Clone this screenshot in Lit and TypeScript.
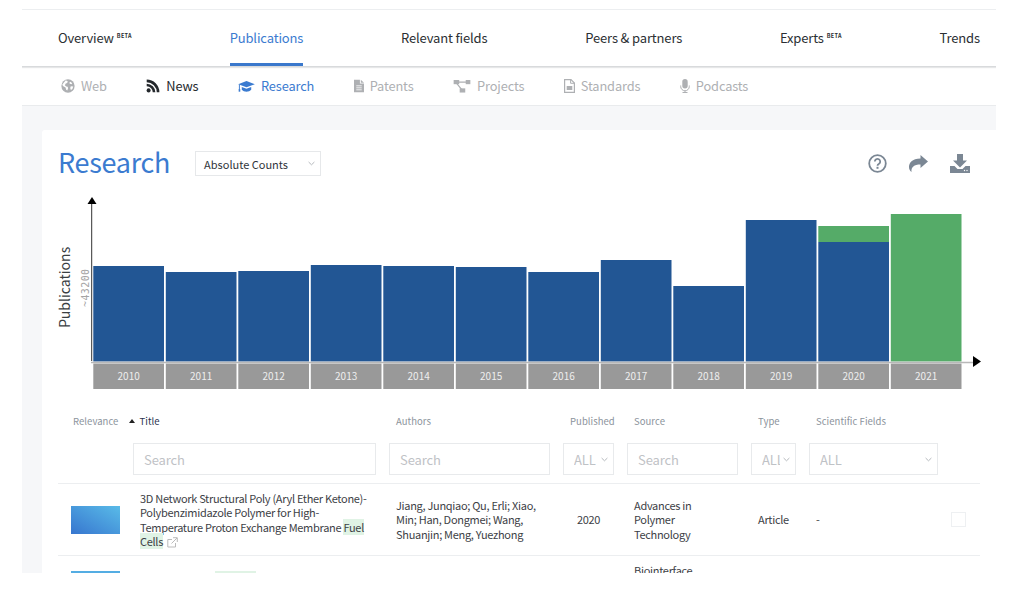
import { LitElement, html, css, svg, unsafeCSS } from "lit";
import { customElement } from "lit/decorators.js";

const FONT = `"Noto Sans CJK JP", "Noto Sans", sans-serif`;

const bars = [
  { y: 2010, top: 266 },
  { y: 2011, top: 272 },
  { y: 2012, top: 271 },
  { y: 2013, top: 265 },
  { y: 2014, top: 266 },
  { y: 2015, top: 267 },
  { y: 2016, top: 272 },
  { y: 2017, top: 260 },
  { y: 2018, top: 286 },
  { y: 2019, top: 220 },
  { y: 2020, top: 242, green: 226 },
  { y: 2021, top: 214, all: true },
];

const icons = {
  globe: html`<svg viewBox="0 0 16 16" width="14" height="14"><circle cx="8" cy="8" r="7.6" fill="currentColor"/><path d="M5.500 1.500 7.800 2.800 7 4.600 5.400 5.200 4.400 7 6 8.600l1.600.2.500 1.700-.9 2.600-1.300-.7-.7-2.800L2.200 8 1.500 6.200ZM10.800 3l2 1.800-.8 1.200-2-.5-.4-1.500ZM11.200 8.200l2.800.3-1 2.900-1.700 1.200-.8-2.400Z" fill="#fff"/></svg>`,
  rss: html`<svg viewBox="0 0 16 16" width="14" height="14"><circle cx="3" cy="13" r="2.300" fill="currentColor"/><path d="M.8 6.800a8.400 8.400 0 0 1 8.400 8.400M.8 2.200a13 13 0 0 1 13 13" fill="none" stroke="currentColor" stroke-width="3"/></svg>`,
  cap: html`<svg viewBox="0 0 18 13" width="17" height="13"><path d="M9 .8 17.800 4 9 7.300.2 4Z" fill="currentColor"/><path d="M4 7v3c1.200 1.400 3 2 5 2s3.800-.6 5-2V7L9 8.900Z" fill="currentColor"/><path d="M1.500 4.500V10" stroke="currentColor" stroke-width="1" fill="none"/><rect x=".7" y="9.300" width="1.700" height="2.700" fill="currentColor"/></svg>`,
  doc: html`<svg viewBox="0 0 11 14" width="10" height="14"><path d="M0 0h6.500v4.300H11V14H0Z" fill="currentColor"/><path d="M7.500 0 11 3.300H7.500Z" fill="currentColor"/><path d="M2.500 6.800h6M2.500 9h6M2.500 11.200h6" stroke="#fff" stroke-width=".9"/></svg>`,
  nodes: html`<svg viewBox="0 0 18 14" width="18" height="13"><rect x="0" y="0" width="6" height="4.500" fill="currentColor"/><rect x="13" y="0" width="5" height="4.500" fill="currentColor"/><rect x="6.500" y="9" width="6" height="4.500" fill="currentColor"/><path d="M5 2.200h8.500M3.500 4l5 6" stroke="currentColor" stroke-width="1.300" fill="none"/></svg>`,
  file: html`<svg viewBox="0 0 11 14" width="11" height="14"><path d="M.6.600h6.400L10.400 4v9.400H.6Z" fill="none" stroke="currentColor" stroke-width="1.200"/><path d="M6.600.600V4.300h3.800" fill="none" stroke="currentColor" stroke-width="1"/><rect x="2.700" y="7" width="5.600" height="4" fill="currentColor"/></svg>`,
  mic: html`<svg viewBox="0 0 10 14" width="10" height="14"><rect x="2.300" y="0" width="5.400" height="9.500" rx="2.700" fill="currentColor"/><path d="M.7 6.500v1a4.300 4.300 0 0 0 8.600 0v-1M5 11.800V13.500M2.500 13.500h5" fill="none" stroke="currentColor" stroke-width="1"/></svg>`,
};

@customElement("app-root")
export class AppRoot extends LitElement {
  static styles = css`
    :host { display: block; width: 1032px; height: 612px; overflow: hidden; background: #fff; font-family: ${unsafeCSS(FONT)}; }
    .page { margin: 9px 36px 0 22px; height: 564px; overflow: hidden; border-top: 1px solid #eceef0; box-sizing: border-box; display: flex; flex-direction: column; }
    .tabs { flex: none; height: 57px; display: flex; justify-content: space-between; padding: 0 16px 0 36px; box-sizing: border-box; font-size: 13px; color: #2b2f33; letter-spacing: -.15px; border-bottom: 1px solid #d8dadc; box-shadow: 0 1px 1px #e6e7e8; position: relative; }
    .tab { height: 56px; box-sizing: border-box; line-height: 56px; white-space: nowrap; }
    .tab.on { color: #3b7bd0; border-bottom: 3px solid #3a78cc; }
    .tab sup { font-size: 5.500px; font-weight: 700; letter-spacing: .3px; line-height: 0; vertical-align: 5px; margin-left: 3px; }
    .sub { flex: none; height: 39px; display: flex; align-items: center; gap: 39.500px; padding-left: 39px; font-size: 12.800px; letter-spacing: -.13px; color: #aeb0b3; border-bottom: 1px solid #e9ebed; box-sizing: border-box; }
    .sub span.item { display: flex; align-items: center; gap: 6px; line-height: 18px; }
    .sub svg { flex: none; }
    .item.dark { color: #24282c; }
    .item.on { color: #3b7bd0; }
    .body { flex: 1; background: #f6f7f9; padding: 24px 0 0 20px; min-height: 0; }
    .card { background: #fff; height: 100%; border-radius: 3px 0 0 0; padding: 0 16px; box-sizing: border-box; overflow: hidden; }
    .head { height: 67px; box-sizing: border-box; display: flex; align-items: center; }
    h2 { margin: 0 25px 0 0; font-size: 27px; font-weight: 400; line-height: 40px; color: #3b7bd0; letter-spacing: -.3px; padding-bottom: 4px; }
    .sel { width: 126px; height: 25px; border: 1px solid #e6e8ea; box-sizing: border-box; display: flex; align-items: center; justify-content: space-between; padding: 0 5px 0 8px; font-size: 11px; color: #30343a; }
    .chev { flex: none; }
    .tools { margin-left: auto; display: flex; align-items: center; gap: 22px; padding-right: 10px; color: #7b8794; }
    .chart { display: block; margin-left: -16px; height: 199px; width: 954px; }
    .table { margin-top: 12px; }
    .row { display: grid; grid-template-columns: 75px 256px 174px 64px 124px 58px 142px 1fr; }
    .labels { height: 26px; font-size: 9.500px; letter-spacing: .05px; color: #8b939c; line-height: 26px; align-items: center; }
    .labels div { white-space: nowrap; padding-left: 7px; }
    .labels .c { padding-left: 15px; }
    .labels .t { color: #2c3450; display: flex; align-items: center; }
    .arrow { width: 0; height: 0; border: 3.500px solid transparent; border-bottom: 4px solid #222; border-top: 0; margin: 0 4.500px 0 -11px; }
    .filters { height: 49px; padding-top: 9px; box-sizing: border-box; }
    .box { height: 32px; border: 1px solid #e8eaec; box-sizing: border-box; font-size: 13px; color: #bfc2c6; letter-spacing: -.1px; display: flex; align-items: center; justify-content: space-between; gap: 3px; padding: 1px 5px 0 10px; white-space: nowrap; }
    .box span { min-width: 0; overflow: hidden; line-height: 22px; }
    .cell { padding-right: 13px; box-sizing: border-box; }
    .data { height: 72px; border-top: 1px solid #eceef0; font-size: 11px; letter-spacing: -.3px; line-height: 14.500px; color: #3d4146; align-items: center; box-sizing: border-box; }
    .data.clip { height: 30px; align-items: start; }
    .thumb { width: 49px; height: 28px; margin-left: 13px; background: linear-gradient(30deg, #3776cf, #59bbe8); }
    .clip .thumb { margin-top: 15px; background: #54ade3; }
    .title { padding: 0 8px 0 7px; }
    .clip .title { padding-top: 15px; }
    mark { background: #e0f3e5; color: inherit; }
    .ghost { display: inline-block; margin-left: 75px; width: 41px; height: 14px; }
    .authors { padding: 0 13px 0 7px; }
    .center { text-align: center; padding-right: 13px; }
    .src { padding: 0 30px 0 7px; }
    .clip .src { padding-top: 7px; }
    .pad { padding-left: 7px; }
    .check { width: 15px; height: 15px; border: 1px solid #eef0f2; box-sizing: border-box; }
    .ext { display: inline-block; vertical-align: -2px; margin-left: 2px; }
  `;

  chart() {
    const bw = 70.7, step = 72.5, x0 = 93.3, base = 361.5;
    return svg`<svg class="chart" viewBox="42 197 954 199" width="954" height="199">
      <g font-family=${FONT}>
      <g font-size="10" fill="#eee" text-anchor="middle">
        ${bars.map((b, i) => {
          const x = x0 + i * step;
          return svg`
            ${b.all
              ? svg`<rect x=${x} y=${b.top} width=${bw} height=${base - b.top} fill="#55ab68"/>`
              : svg`<rect x=${x} y=${b.top} width=${bw} height=${base - b.top} fill="#225694"/>`}
            ${b.green ? svg`<rect x=${x} y=${b.green} width=${bw} height=${b.top - b.green} fill="#55ab68"/>` : ""}
            <rect x=${x} y="363.500" width=${bw} height="25.500" fill="#999"/>
            <text x=${x + bw / 2} y="379.500">${b.y}</text>`;
        })}
      </g>
      <path d="M91.700 203V361" stroke="#333" stroke-width="1" fill="none"/>
      <path d="M87.500 204 92 197 96.500 204Z" fill="#000"/>
      <path d="M91 362.500H974" stroke="#b8b8b8" stroke-width="1.500" fill="none"/>
      <path d="M973 356 981 361.500 973 367Z" fill="#000"/>
      <text transform="translate(69.500 328) rotate(-90)" font-size="14" fill="#3a3e42">Publications</text>
      <text transform="translate(88.500 307) rotate(-90)" font-size="10" font-family="'DejaVu Sans Mono', monospace" letter-spacing=".4" fill="#a4a4a4">~43200</text>
      </g>
    </svg>`;
  }

  render() {
    const chev = html`<svg class="chev" width="7" height="5" viewBox="0 0 7 5"><path d="M.6 1 3.500 3.800 6.400 1" fill="none" stroke="#b4b8bc" stroke-width="1"/></svg>`;
    return html`<div class="page">
      <nav class="tabs">
        <div class="tab">Overview<sup>BETA</sup></div>
        <div class="tab on">Publications</div>
        <div class="tab">Relevant fields</div>
        <div class="tab">Peers &amp; partners</div>
        <div class="tab">Experts<sup>BETA</sup></div>
        <div class="tab">Trends</div>
      </nav>
      <div class="sub">
        <span class="item">${icons.globe}Web</span>
        <span class="item dark">${icons.rss}News</span>
        <span class="item on">${icons.cap}Research</span>
        <span class="item">${icons.doc}Patents</span>
        <span class="item">${icons.nodes}Projects</span>
        <span class="item">${icons.file}Standards</span>
        <span class="item">${icons.mic}Podcasts</span>
      </div>
      <div class="body">
        <div class="card">
          <div class="head">
            <h2>Research</h2>
            <div class="sel">Absolute Counts ${chev}</div>
            <div class="tools">
              <svg width="19" height="19" viewBox="0 0 19 19"><circle cx="9.500" cy="9.500" r="8.300" fill="none" stroke="currentColor" stroke-width="1.800"/><path d="M6.800 7.500a2.700 2.700 0 1 1 4.200 2.300c-1 .6-1.500 1-1.500 2" fill="none" stroke="currentColor" stroke-width="1.800"/><rect x="8.500" y="12.800" width="2" height="2" fill="currentColor"/></svg>
              <svg width="19" height="17" viewBox="0 0 19 17"><path d="M19 6.500 11.500 0V3.500C3 3.500 0 8 0 12c0 2 .8 3.800 2.500 5C2 12 5 9.500 11.500 9.500V13Z" fill="currentColor"/></svg>
              <svg width="20" height="19" viewBox="0 0 20 19"><path d="M7 0h6v6.500h4L10 13.500 3 6.500h4Z" fill="currentColor"/><path d="M0 12h4.500l3 3h5l3-3H20v7H0Z" fill="currentColor"/><circle cx="14.500" cy="16.500" r=".7" fill="#fff"/><circle cx="17" cy="16.500" r=".7" fill="#fff"/></svg>
            </div>
          </div>
          ${this.chart()}
          <div class="table">
            <div class="row labels">
              <div class="c">Relevance</div><div class="t"><span class="arrow"></span>Title</div><div>Authors</div><div>Published</div><div>Source</div><div>Type</div><div>Scientific Fields</div><div></div>
            </div>
            <div class="row filters">
              <div></div>
              <div class="cell"><div class="box"><span>Search</span></div></div>
              <div class="cell"><div class="box"><span>Search</span></div></div>
              <div class="cell"><div class="box"><span>ALL</span>${chev}</div></div>
              <div class="cell"><div class="box"><span>Search</span></div></div>
              <div class="cell"><div class="box"><span>ALL</span>${chev}</div></div>
              <div class="cell"><div class="box"><span>ALL</span>${chev}</div></div>
              <div></div>
            </div>
            <div class="row data">
              <div class="thumb"></div>
              <div class="title">3D Network Structural Poly (Aryl Ether Ketone)-Polybenzimidazole Polymer for High-Temperature Proton Exchange Membrane <mark>Fuel Cells</mark> <svg class="ext" width="11" height="11" viewBox="0 0 11 11"><path d="M8.500 6v4H.8V2.500H5M6 .7h4.300V5M10 1 4.500 6.500" fill="none" stroke="#bbb" stroke-width="1"/></svg></div>
              <div class="authors">Jiang, Junqiao; Qu, Erli; Xiao, Min; Han, Dongmei; Wang, Shuanjin; Meng, Yuezhong</div>
              <div class="center">2020</div>
              <div class="src">Advances in Polymer Technology</div>
              <div class="pad">Article</div>
              <div class="pad">-</div>
              <div><div class="check"></div></div>
            </div>
            <div class="row data clip">
              <div class="thumb"></div>
              <div class="title"><mark class="ghost"></mark></div>
              <div></div><div></div>
              <div class="src">Biointerface</div>
            </div>
          </div>
        </div>
      </div>
    </div>`;
  }
}
